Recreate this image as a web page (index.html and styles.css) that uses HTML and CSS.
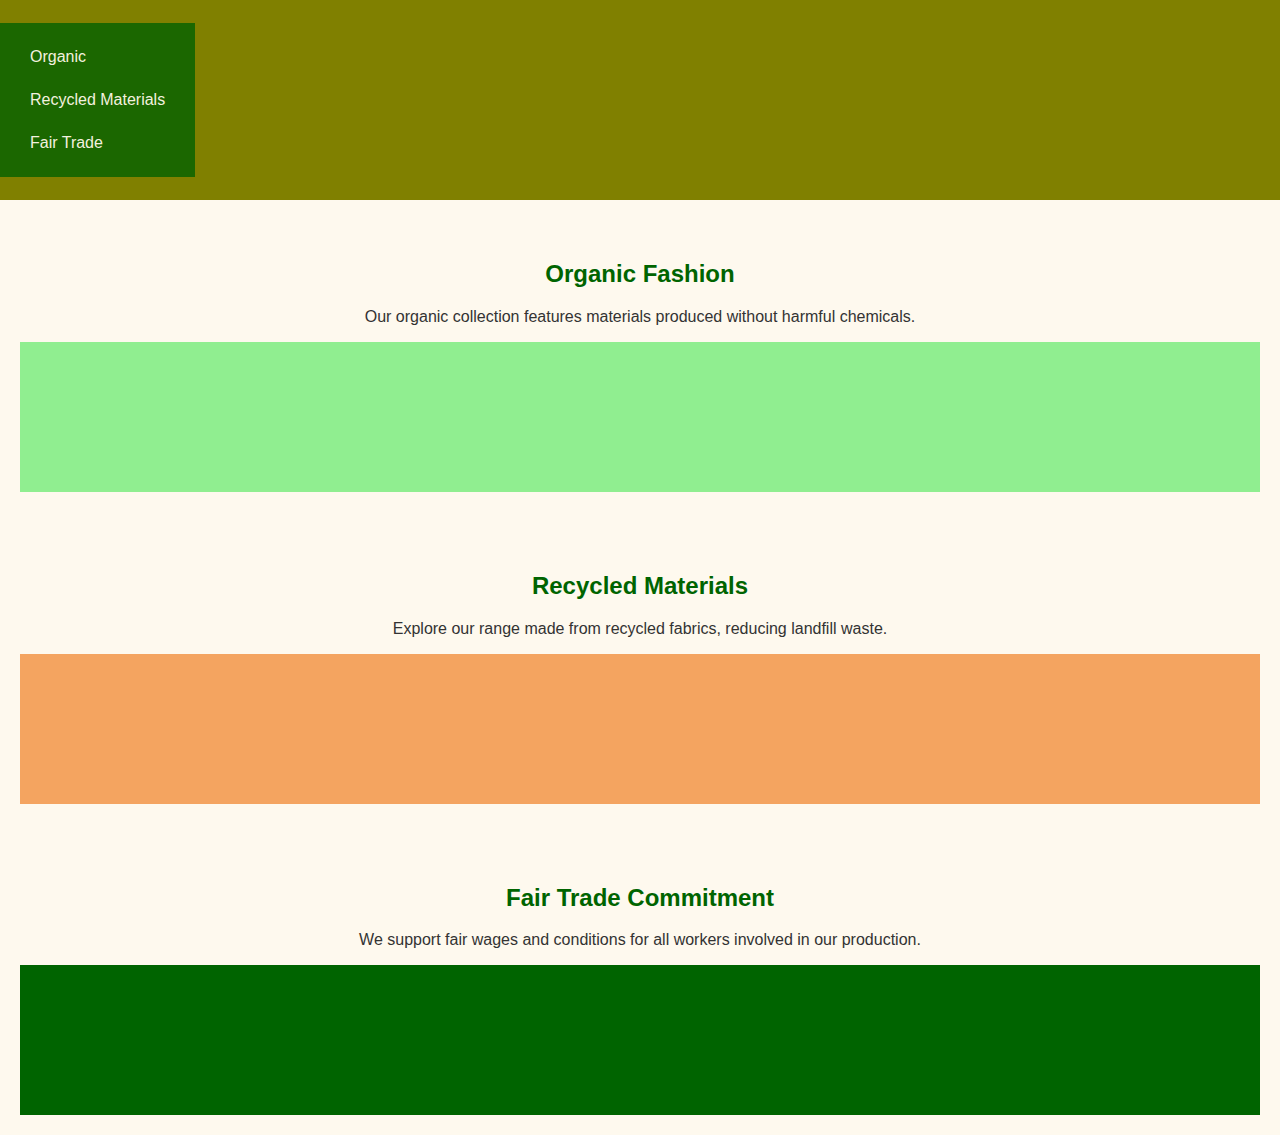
FILE: index.html
```html
<!DOCTYPE html>
<html lang="en">
<head>
<meta charset="utf-8">
<title>Sustainable Fashion</title>
<link rel="stylesheet" href="styles.css">
</head>
<body>
<header class="site-header">
  <nav class="side-nav">
    <a class="nav-link" href="#organic">Organic</a>
    <a class="nav-link" href="#recycled">Recycled Materials</a>
    <a class="nav-link" href="#fairtrade">Fair Trade</a>
  </nav>
</header>
<main class="content">
  <section class="feature" id="organic">
    <h2 class="feature-title">Organic Fashion</h2>
    <p class="feature-text">Our organic collection features materials produced without harmful chemicals.</p>
    <div class="feature-box box-green"></div>
  </section>
  <section class="feature" id="recycled">
    <h2 class="feature-title">Recycled Materials</h2>
    <p class="feature-text">Explore our range made from recycled fabrics, reducing landfill waste.</p>
    <div class="feature-box box-sand"></div>
  </section>
  <section class="feature" id="fairtrade">
    <h2 class="feature-title">Fair Trade Commitment</h2>
    <p class="feature-text">We support fair wages and conditions for all workers involved in our production.</p>
    <div class="feature-box box-dark"></div>
  </section>
</main>
</body>
</html>
```
FILE: styles.css
```css
html, body {
  margin: 0;
  padding: 0;
}
body {
  background: #fef9ee;
  font-family: "Liberation Sans", Arial, sans-serif;
  color: #333;
}
.site-header {
  background: #808000;
  height: 200px;
  padding-top: 23px;
  box-sizing: border-box;
}
.side-nav {
  display: flex;
  flex-direction: column;
  width: 195px;
  background: #1b6700;
  padding: 12px 0 13px;
  box-sizing: border-box;
}
.nav-link {
  display: block;
  height: 43px;
  line-height: 43px;
  padding: 0 30px;
  color: #f3f1df;
  text-decoration: none;
  font-size: 16px;
  white-space: nowrap;
}
.content {
  padding: 20px;
}
.feature {
  padding: 20px 0;
  margin-bottom: 20px;
  text-align: center;
}
.feature-title {
  color: #006400;
  font-size: 24px;
  font-weight: bold;
  margin: 0.83em 0;
}
.feature-text {
  font-size: 16px;
  margin: 16px 0;
}
.feature-box {
  height: 150px;
}
.box-green { background: #90ee90; }
.box-sand { background: #f4a460; }
.box-dark { background: #006400; }
```
